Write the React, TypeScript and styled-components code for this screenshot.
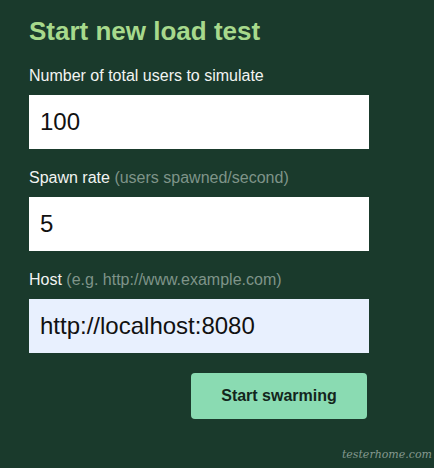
import React from 'react'
import styled, { createGlobalStyle } from 'styled-components'

const GlobalStyle = createGlobalStyle`
  html, body {
    margin: 0;
    padding: 0;
    background: #1a3a2c;
  }

  body {
    font-family: 'Liberation Sans', Arial, sans-serif;
    min-height: 468px;
  }
`

const Page = styled.div`
  position: relative;
  min-height: 468px;
  padding: 16px 0 0 29px;
  box-sizing: border-box;
  background: #1a3a2c;
`

const Form = styled.form`
  display: flex;
  flex-direction: column;
  width: 340px;
`

const Title = styled.h2`
  margin: 0 0 21px;
  font-size: 26px;
  font-weight: bold;
  color: #a7d98c;
  line-height: 30px;
`

const Label = styled.label`
  font-size: 16px;
  line-height: 17px;
  color: #f2f4f2;
  margin-bottom: 11px;
`

const Hint = styled.span`
  color: #7f9489;
`

const Input = styled.input<{ $autofill?: boolean }>`
  box-sizing: border-box;
  width: 340px;
  height: 54px;
  margin: 0 0 20px;
  padding: 0 11px;
  border: none;
  outline: none;
  border-radius: 0;
  font-family: 'Liberation Sans', Arial, sans-serif;
  font-size: 24px;
  color: #111;
  background: ${(p) => (p.$autofill ? '#e8f0fe' : '#ffffff')};
`

const Actions = styled.div`
  display: flex;
  justify-content: flex-end;
  padding-right: 2px;
`

const SubmitButton = styled.button`
  width: 176px;
  height: 46px;
  border: none;
  border-radius: 4px;
  background: #8adbb2;
  color: #13261c;
  font-family: 'Liberation Sans', Arial, sans-serif;
  font-size: 16px;
  font-weight: bold;
  cursor: pointer;
`

// site watermark in the corner of the screenshot
const Watermark = styled.span`
  position: absolute;
  right: 2px;
  bottom: 7px;
  font-family: 'DejaVu Serif', serif;
  font-style: italic;
  font-size: 11px;
  color: #9fb0a7;
  opacity: 0.8;
`

export default function App() {
  return (
    <>
      <GlobalStyle />
      <Page>
        <Form onSubmit={(e) => e.preventDefault()}>
          <Title>Start new load test</Title>

          <Label htmlFor="user_count">Number of total users to simulate</Label>
          <Input id="user_count" name="user_count" defaultValue="100" />

          <Label htmlFor="spawn_rate">
            Spawn rate <Hint>(users spawned/second)</Hint>
          </Label>
          <Input id="spawn_rate" name="spawn_rate" defaultValue="5" />

          <Label htmlFor="host">
            Host <Hint>(e.g. http://www.example.com)</Hint>
          </Label>
          <Input id="host" name="host" defaultValue="http://localhost:8080" $autofill />

          <Actions>
            <SubmitButton type="submit">Start swarming</SubmitButton>
          </Actions>
        </Form>
        <Watermark>testerhome.com</Watermark>
      </Page>
    </>
  )
}
